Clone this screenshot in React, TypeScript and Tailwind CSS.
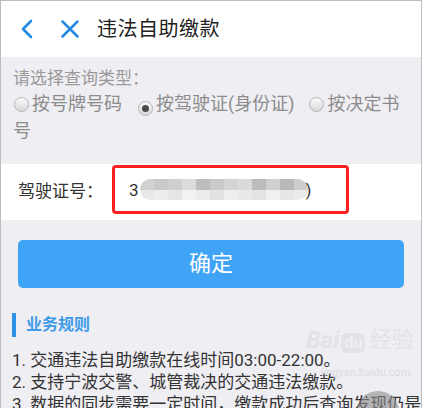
import React from 'react';

const Radio = ({ checked = false, className = '' }: { checked?: boolean; className?: string }) => (
  <span
    className={`inline-flex items-center justify-center align-[-2px] w-[15px] h-[15px] rounded-full border border-[#b5b5b5] bg-gradient-to-b from-[#fafafa] to-[#d9d9d9] ${className}`}
  >
    {checked && <span className="w-[7px] h-[7px] rounded-full bg-[#4a4a4a]" />}
  </span>
);

// pixelated blur over the licence number
const blurTop = ['#d2d2d2', '#c9c9c9', '#cfcfcf', '#dcdcdc', '#bdbdbd', '#cacaca', '#d4d4d4', '#dadada', '#bcbcbc', '#d0d0d0', '#b9b9b9', '#cdcdcd'];
const blurBottom = ['#e8e8e8', '#ededed', '#e6e6e6', '#f2f2f2', '#ececec', '#e2e2e2', '#eeeeee', '#e9e9e9', '#e4e4e4', '#f0f0f0', '#e7e7e7', '#eaeaea'];

const App = () => {
  return (
    <div className="relative w-[422px] h-[408px] overflow-hidden border border-b-0 border-[#bdbdbd] bg-[#efeef3] font-['Roboto','Noto_Sans_CJK_SC',sans-serif]">
      {/* Header */}
      <header className="h-[56px] bg-white flex items-center">
        <svg className="ml-[18px]" width="16" height="20" viewBox="0 0 16 20" fill="none">
          <path d="M12 2 L4 10 L12 18" stroke="#2389e3" strokeWidth="2.6" strokeLinecap="round" strokeLinejoin="round" />
        </svg>
        <svg className="ml-[26px]" width="18" height="18" viewBox="0 0 18 18" fill="none">
          <path d="M1.5 1.5 L16.5 16.5 M16.5 1.5 L1.5 16.5" stroke="#2389e3" strokeWidth="2.5" strokeLinecap="round" />
        </svg>
        <h1 className="ml-[18px] text-[20px] leading-[24px] text-[#222] tracking-[0.5px]">违法自助缴款</h1>
      </header>

      {/* Query type */}
      <section className="pl-[12px] pr-[12px] pt-[9px]">
        <p className="text-[17px] leading-[24px] text-[#9a9a9a]">请选择查询类型：</p>
        <p className="text-[18px] leading-[27px] text-[#8c8c8c]">
          <Radio className="ml-[1px] mr-[3px]" />按号牌号码
          <Radio checked className="ml-[16px] mr-[3px]" />按驾驶证(身份证)
          <Radio className="ml-[15px] mr-[3px]" />按决定书号
        </p>
      </section>

      {/* Licence input */}
      <div className="mt-[20px] h-[56px] bg-white flex items-start">
        <span className="ml-[17px] mt-[15px] w-[94px] text-[17px] leading-[24px] text-[#333]">驾驶证号：</span>
        <div className="mt-[1px] w-[237px] h-[49px] border-[3px] border-[#ff2121] rounded-[4px] flex items-center pl-[14px]">
          <span className="text-[17px] leading-[20px] text-[#333]">3</span>
          <span className="ml-[1px] flex flex-col rounded-full overflow-hidden h-[21px]">
            <span className="flex h-[11px]">
              {blurTop.map((c, i) => (
                <span key={i} className="w-[14px] h-full" style={{ background: c }} />
              ))}
            </span>
            <span className="flex h-[10px]">
              {blurBottom.map((c, i) => (
                <span key={i} className="w-[14px] h-full" style={{ background: c }} />
              ))}
            </span>
          </span>
          <span className="-ml-[2px] text-[17px] leading-[20px] text-[#333]">)</span>
        </div>
      </div>

      {/* Submit */}
      <div className="px-[17px] mt-[20px]">
        <button className="w-full h-[48px] rounded-[5px] bg-[#40a4f6] text-white text-[22px] leading-[28px]">确定</button>
      </div>

      {/* Rules */}
      <section className="mt-[25px] pl-[11px] pr-[8px]">
        <div className="flex items-center h-[24px]">
          <span className="w-[4px] h-[24px] bg-[#2b93e6]" />
          <h2 className="ml-[10px] text-[16px] leading-[20px] font-bold text-[#3d9be9]">业务规则</h2>
        </div>
        <ol className="mt-[12px] text-[17px] leading-[22px] text-[#333] whitespace-nowrap">
          <li>1. 交通违法自助缴款在线时间03:00-22:00。</li>
          <li>2. 支持宁波交警、城管裁决的交通违法缴款。</li>
          <li>3. 数据的同步需要一定时间，缴款成功后查询发现仍是</li>
        </ol>
      </section>

      {/* Watermark and floating button */}
      <div className="absolute left-[305px] top-[326px] flex items-end text-[#e2e2e6] opacity-90 pointer-events-none">
        <span className="text-[24px] leading-[26px] font-bold italic">Bai</span>
        <span className="ml-[2px] px-[3px] rounded-[6px] bg-[#e2e2e6] text-[#efeef3] text-[16px] leading-[20px] font-bold">du</span>
        <span className="ml-[4px] text-[22px] leading-[26px]">经验</span>
      </div>
      <div className="absolute left-[320px] top-[366px] text-[11px] leading-[12px] text-[#dcdce0] pointer-events-none">jingyan.baidu.com</div>
      <div className="absolute left-[356px] top-[390px] w-[42px] h-[42px] rounded-full bg-[#8a8a8a]/60" />
    </div>
  );
};

export default App;
